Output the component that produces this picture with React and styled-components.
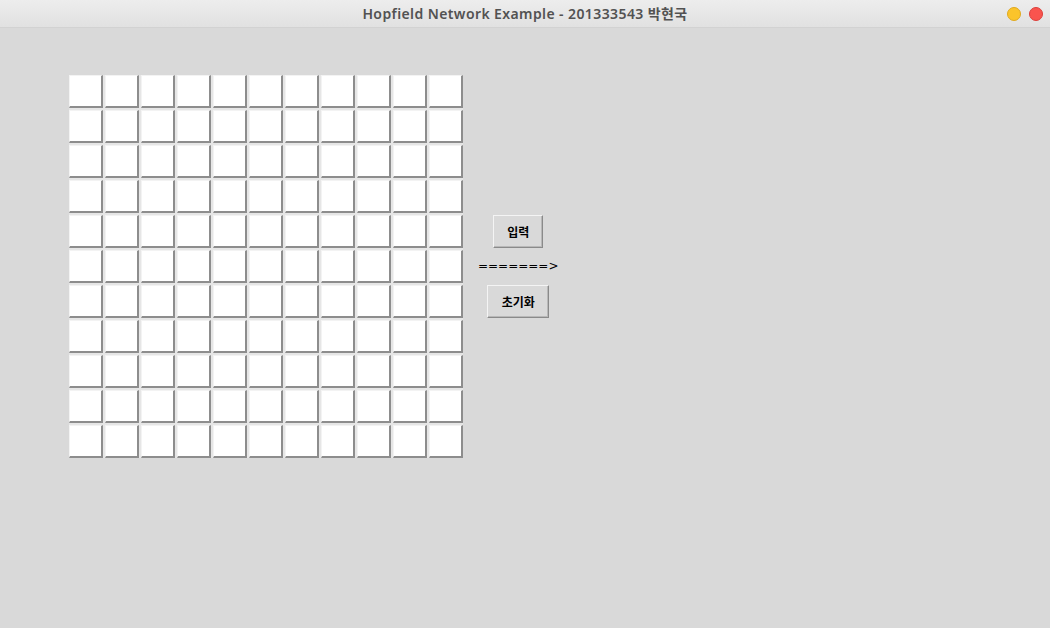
import React from "react";
import styled, { createGlobalStyle } from "styled-components";

const Global = createGlobalStyle`
  html, body { margin: 0; padding: 0; background: #d9d9d9; }
  body { font-family: "DejaVu Sans", sans-serif; }
`;

const Window = styled.div`
  width: 1050px;
  height: 628px;
  display: flex;
  flex-direction: column;
  background: #d9d9d9;
  overflow: hidden;
`;

const TitleBar = styled.div`
  position: relative;
  height: 28px;
  flex: none;
  display: flex;
  align-items: center;
  justify-content: center;
  background: linear-gradient(#ededed, #e1e1e1);
  border-bottom: 1px solid #d2d2d2;
  box-sizing: border-box;
`;

const Title = styled.span`
  font-family: "Noto Sans", "Noto Sans CJK KR", sans-serif;
  font-size: 14px;
  font-weight: 600;
  color: #525252;
  letter-spacing: 0.4px;
  margin-top: -1px;
`;

const Lights = styled.div`
  position: absolute;
  right: 7px;
  top: 7px;
  display: flex;
  gap: 8px;
`;

const Light = styled.span`
  width: 14px;
  height: 14px;
  border-radius: 50%;
  box-sizing: border-box;
  background: ${(p) => p.$color};
  border: 1px solid ${(p) => p.$edge};
`;

const Content = styled.div`
  flex: none;
  display: flex;
  align-items: center;
  align-self: flex-start;
  gap: 15px;
  padding: 47px 0 0 69px;
`;

const Grid = styled.div`
  display: grid;
  grid-template-columns: repeat(11, 34px);
  grid-auto-rows: 33px;
  gap: 2px;
  background: #e6e6e6;
`;

const Cell = styled.div`
  box-sizing: border-box;
  background: #ffffff;
  border-top: 1px solid #f3f3f3;
  border-left: 1px solid #f3f3f3;
  border-right: 2px solid #8d8d8d;
  border-bottom: 2px solid #8d8d8d;
`;

const Controls = styled.div`
  display: flex;
  flex-direction: column;
  align-items: center;
  margin-top: -1px;
`;

const Button = styled.button`
  box-sizing: border-box;
  height: 33px;
  width: ${(p) => p.$w}px;
  padding: 0;
  background: #d9d9d9;
  border-top: 1px solid #f4f4f4;
  border-left: 1px solid #f4f4f4;
  border-right: 1px solid #8a8a8a;
  border-bottom: 1px solid #8a8a8a;
  box-shadow: inset -1px -1px 0 #b8b8b8;
  font-family: "Noto Sans CJK KR", sans-serif;
  font-size: 12px;
  font-weight: 700;
  color: #000;
  display: flex;
  align-items: center;
  justify-content: center;
`;

const Arrow = styled.div`
  font-family: "DejaVu Sans", sans-serif;
  font-size: 12px;
  line-height: 37px;
  height: 37px;
  color: #000;
  white-space: pre;
`;

export default function App() {
  const cells = Array.from({ length: 121 }, (_, i) => i);
  return (
    <>
      <Global />
      <Window>
        <TitleBar>
          <Title>Hopfield Network Example - 201333543 박현국</Title>
          <Lights>
            <Light $color="#fbc42b" $edge="#e0a91f" />
            <Light $color="#f9544e" $edge="#dc3f3a" />
          </Lights>
        </TitleBar>
        <Content>
          <Grid>
            {cells.map((i) => (
              <Cell key={i} />
            ))}
          </Grid>
          <Controls>
            <Button $w={50}>입력</Button>
            <Arrow>=======&gt;</Arrow>
            <Button $w={62}>초기화</Button>
          </Controls>
        </Content>
      </Window>
    </>
  );
}
